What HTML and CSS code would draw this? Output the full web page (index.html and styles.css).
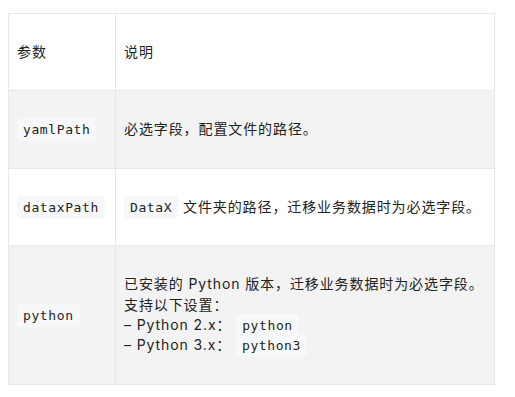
FILE: index.html
```html
<!DOCTYPE html>
<html lang="zh-CN">
<head>
<meta charset="utf-8">
<link rel="stylesheet" href="styles.css">
</head>
<body>
<div class="page">
  <table class="params">
    <colgroup>
      <col class="col-name">
      <col class="col-desc">
    </colgroup>
    <thead>
      <tr>
        <th>参数</th>
        <th>说明</th>
      </tr>
    </thead>
    <tbody>
      <tr class="alt">
        <td><code>yamlPath</code></td>
        <td>必选字段，配置文件的路径。</td>
      </tr>
      <tr>
        <td><code>dataxPath</code></td>
        <td><code>DataX</code> 文件夹的路径，迁移业务数据时为必选字段。</td>
      </tr>
      <tr class="alt">
        <td><code>python</code></td>
        <td>已安装的 Python 版本，迁移业务数据时为必选字段。<br>支持以下设置：<br>– Python 2.x： <code>python</code><br>– Python 3.x： <code>python3</code></td>
      </tr>
    </tbody>
  </table>
</div>
</body>
</html>
```
FILE: styles.css
```css
html, body {
  margin: 0;
  padding: 0;
  background: #ffffff;
}

.page {
  padding: 13px 8px;
}

.params {
  width: 487px;
  table-layout: fixed;
  border-collapse: collapse;
  font-family: Inter, "Noto Sans CJK SC", sans-serif;
  font-size: 14px;
  letter-spacing: 0.9px;
  line-height: 20.4px;
  color: #222222;
}

.col-name {
  width: 107px;
}

.params th,
.params td {
  border: 1px solid #e8e8e8;
  padding: 28px 4px 28px 8px;
  text-align: left;
  vertical-align: middle;
  font-weight: normal;
}

.params tr.alt td {
  background: #f3f3f3;
}

.params code {
  font-family: "DejaVu Sans Mono", monospace;
  font-size: 13px;
  line-height: 1;
  letter-spacing: 0.6px;
  background: #f7f8fa;
  border-radius: 4px;
  padding: 4px 6px;
  color: #1f1f1f;
}
```
